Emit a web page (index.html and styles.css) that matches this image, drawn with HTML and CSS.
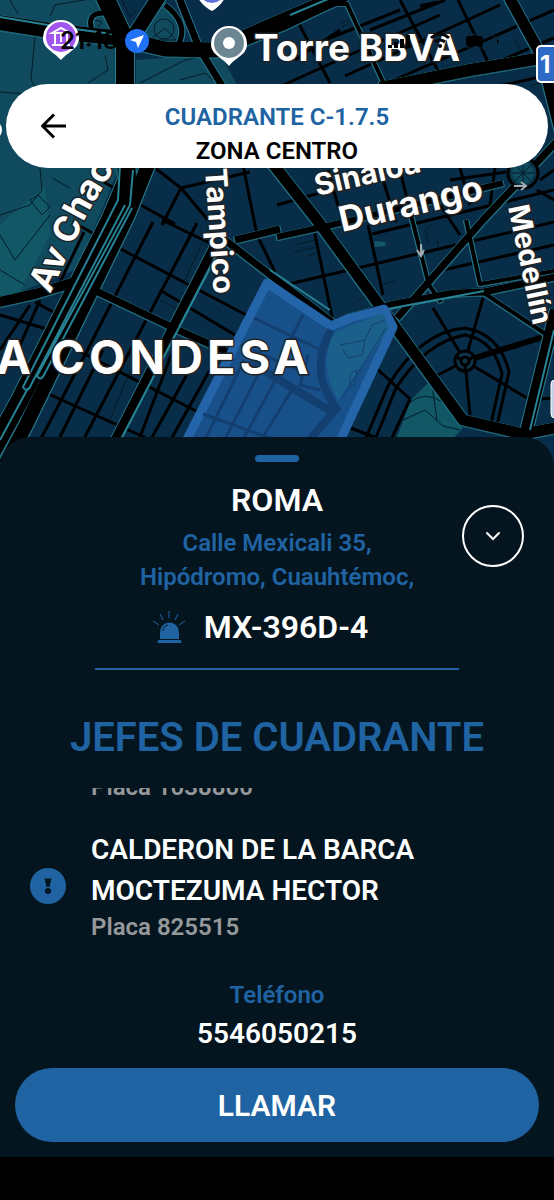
FILE: index.html
```html
<!DOCTYPE html>
<html lang="es">
<head>
<meta charset="utf-8">
<meta name="viewport" content="width=device-width, initial-scale=1">
<title>Cuadrante C-1.7.5</title>
<link rel="stylesheet" href="styles.css">
</head>
<body>
<main class="app">
  <svg class="map" viewBox="0 0 554 480" preserveAspectRatio="xMidYMin slice" role="img" aria-label="Mapa de La Condesa">
    <defs>
      <path id="label-chapultepec" d="M50 294L79 232Q86 215 101 191L124 152"/>
      <g id="avenues">
        <path stroke-width="15" d="M-5 22L60 32L118 38L165 49L215 50L280 22L345 -6"/>
        <path stroke-width="18" d="M104 -5L125 40V130L127 180L110 220L20 400L-10 455"/>
        <path stroke-width="14" d="M160 -5L126 48"/>
        <path stroke-width="14" d="M150 160L128 215L26 425L5 465"/>
        <path stroke-width="10" d="M-5 303L35 294L75 282"/>
        <path stroke-width="7" d="M92 289L178 330L250 362L345 412"/>
        <path stroke-width="11" d="M262 150L317 220L377 302L463 420L523 434L560 427"/>
        <path stroke-width="7" d="M178 -5L200 50L262 150"/>
        <path stroke-width="7" d="M560 138L483 220L397 318"/>
        <path stroke-width="11" d="M508 -5L541 55L560 130"/>
        <path stroke-width="12" d="M380 88L470 70L560 55"/>
        <path stroke-width="12" d="M556 310L524 440"/>
        <path stroke-width="4" d="M225 52L285 28L335 4L347 4L385 86"/>
        <path stroke-width="7" d="M347 318L390 305L454 293L484 292L560 276"/>
        <path stroke-width="6" d="M277 237L345 222L503 183"/>
        <path stroke-width="4" d="M466 220L480 284L560 270M484 293L550 337M411 215L429 285L441 302"/>
        <path stroke-width="9" d="M214 247L110 450"/>
        <path stroke-width="7" d="M225 240L277 280L332 322M235 240L280 229"/>
        <path stroke-width="5" d="M92 30Q86 12 105 13M165 5Q190 24 178 45"/>
      </g>
      <g id="streets">
        <path d="M153 222L90 345L35 450M197 223L78 450M60 437L103 350M175 345L135 450M195 360L145 450M211 368L165 450M84 232L60 282M30 305L0 350M40 300L20 345"/>
        <path d="M117 247L250 317M77 350L200 413M42 391L155 442M160 290L235 335M12 428L30 440M0 315L50 330M35 302L55 313M78 225L98 236M162 220L220 248"/>
        <path d="M155 168L181 188L162 225M181 188L250 172M181 188L208 220M139 204L175 224M242 160L257 235M257 235L275 272M100 180L140 202"/>
        <path d="M277 88L345 57L440 15M295 60L340 30M298 22L330 83M325 40L400 10M400 0L442 78M458 0L490 66M370 30L445 0M345 76L500 5M385 84L554 10M420 6L438 2M490 65L554 38M480 90L554 74"/>
        <path d="M289 284L554 222M313 225L332 317M368 225L383 295M443 270L554 245M372 234L554 190M328 170L342 220M380 170L396 222M400 170L411 215M277 205L330 190M440 205L460 235M495 168L490 205M450 180L506 172M540 180L554 170M537 190L554 200M460 168L470 205"/>
        <path d="M465 361L433 308M465 361L483 298M465 361L527 398M465 361L470 415M465 361L430 379M374 366L410 399M348 427L395 445M410 399L390 442M540 399L554 398"/>
        <path stroke-width="6" d="M465 361L543 337"/>
        <path stroke-width="3" d="M365 440L388 386Q420 332 465 328Q500 334 509 372L496 430M375 440L396 388Q426 342 465 335Q494 340 502 374L490 428"/>
      </g>
    </defs>
    <rect class="land" width="554" height="480"/>
    <path class="park" d="M0 0H104L118 38V170L100 215L75 270L20 292L0 298ZM136 60L220 54L240 90L136 100ZM137 18L165 0L185 45L140 47Z"/>
    <path class="park park--bright" d="M429 382L463 428L450 442H395L411 400ZM0 225L45 185L50 235L20 292L0 298ZM375 241L386 242L385 246L374 247Z"/>
    <g class="paths">
      <path d="M10 0L18 14M50 16L55 5L95 -2M35 35L31 80L40 95L0 92M105 55L108 70L88 83M40 168L42 190L30 205L0 215M52 178L70 188M30 200L38 195L50 207L42 215ZM0 235L15 260L50 215M0 270L25 285M140 83L185 60L225 52M95 20L102 22L98 27M165 28L150 40H176ZM122 0L130 17L137 10M180 80L205 73L213 80"/>
      <circle cx="164" cy="29" r="10"/>
      <path d="M409 403Q425 390 442 402L463 427M403 420L425 410L443 426L460 430M432 385L437 420"/>
      <path d="M294 245L315 240M294 252L316 247M308 256L316 253M358 300L372 293M383 284L395 281M428 245L426 230L433 224M438 246V239M340 23L349 20M342 27L350 22M514 38L520 50M530 86L545 82"/>
      <path d="M185 280L202 243L214 252M160 300L190 315M130 370L108 425"/>
    </g>
    <use href="#streets" class="streets"/>
    <use href="#avenues" class="casing"/>
    <use href="#avenues" class="avenues"/>
    <path class="medians" d="M0 17L60 27L112 34M120 165L118 200L23 387Q27 394 31 385L125 205M133 170L130 205L37 376Q41 382 45 373L132 208M0 440L28 388M222 245L118 445M330 310L270 270M350 316L484 291M554 330L530 430M290 15L345 -8"/>
    <g class="plaza">
      <circle cx="465" cy="361" r="10"/>
      <circle cx="465" cy="361" r="4"/>
      <path d="M456 356L461 360M474 356L469 360M465 365V371"/>
      <circle cx="523" cy="173" r="15"/>
    </g>
    <circle class="park" cx="523" cy="173" r="11"/>
    <path class="paths" d="M512 173H534M523 162V184M515 165L531 181M531 165L515 181"/>
    <g class="zone">
      <path class="zone__area" d="M267 283L331 326L350 318L384 309L393 327L338 445H184Z"/>
      <path class="zone__park" d="M334 332L383 313L389 328L338 400Q318 365 334 332Z"/>
      <path class="zone__streets" d="M254 318L325 352M240 345L310 375M203 414L275 440M244 360L205 440M261 369L222 445M277 377L240 445M293 388L255 450M303 315L290 340M308 355L300 385L320 390"/>
      <path class="zone__avenue" d="M250 362L332 412M331 330Q312 365 328 395L338 412M335 410L305 445"/>
      <path class="zone__details" d="M340 345L365 340L372 325L385 320M350 388V374L357 370L355 385ZM365 340L362 355L348 358L343 350M386 328L342 398"/>
    </g>
    <g class="labels">
      <text x="254" y="61" font-size="37">Torre BBVA</text>
      <text x="-4" y="374" font-size="47" letter-spacing="4">A CONDESA</text>
      <text font-size="35"><textPath href="#label-chapultepec">Av Chac</textPath></text>
      <text font-size="30" transform="translate(205 169) rotate(86)">Tampico</text>
      <text font-size="30" transform="translate(317 196) rotate(-13)">Sinaloa</text>
      <text font-size="35" transform="translate(342 232) rotate(-13)">Durango</text>
      <text font-size="29" transform="translate(508 207) rotate(78)">Medellín</text>
    </g>
    <g class="pins">
      <path fill="#fff" d="M43 38A18 18 0 1 1 79 38C79 49 69 51 61 60C53 51 43 49 43 38Z"/>
      <circle cx="61" cy="37" r="15" fill="#a256f0"/>
      <path fill="none" stroke="#fff" stroke-width="2" d="M52 33L61 28L70 33ZM55 33V44M61 33V42M67 33V44M52 45H70"/>
      <path fill="#fff" d="M211 44A18 18 0 1 1 247 44C247 55 236 57 229 66C222 57 211 55 211 44Z"/>
      <circle cx="229" cy="43" r="15" fill="#6b8591"/>
      <circle cx="229" cy="43" r="6" fill="#fff"/>
      <path fill="#fff" d="M197 -4H226Q221 6 212 11Q202 6 197 -4Z"/>
      <circle cx="212" cy="-10" r="13" fill="#5e72d8"/>
      <circle cx="-8" cy="130" r="10" fill="#fff"/>
      <rect x="537" y="46" width="38" height="36" rx="4" fill="#2d6bc6" stroke="#fff" stroke-width="2"/>
      <text x="540" y="73" font-size="24">1</text>
      <rect x="551" y="380" width="20" height="38" rx="4" fill="#c5cee5" stroke="#fff" stroke-width="1"/>
      <path fill="none" stroke="#a5abb0" stroke-width="2" d="M421 244V255M417 250L421 256L424 250M514 186H525M521 182L526 186L521 190"/>
    </g>
  </svg>

  <div class="top">
    <div class="status">
      <time class="status__time">21:18</time>
      <svg class="status__location" viewBox="0 0 24 24" aria-hidden="true"><circle cx="12" cy="12" r="12" fill="#2071f5"/><path fill="#fff" d="M19 6L13 19L11 13L5 11Z"/></svg>
      <svg class="status__system" viewBox="0 0 114 20" aria-hidden="true">
        <path d="M2 14H6V17H2ZM8 11H12V17H8ZM14 8H18V17H14ZM20 4H24V17H20Z"/>
        <path fill="none" stroke="#080808" stroke-width="3" d="M45 7Q54 -1 63 7M49 11Q54 7 59 11"/><circle cx="54" cy="15" r="2"/>
        <rect x="78" y="3" width="31" height="14" rx="5" fill="none" stroke="#102638" stroke-width="1"/><rect x="80" y="5" width="17" height="10" rx="3"/><path d="M111 8Q114 10 111 13Z"/>
      </svg>
    </div>
    <header class="header">
      <button class="header__back" type="button" aria-label="Volver">
        <svg viewBox="0 0 26 26" aria-hidden="true"><path d="M25 13H2M13 1.500L1.500 13L13 24.500"/></svg>
      </button>
      <div class="header__text">
        <h1 class="header__title">CUADRANTE C-1.7.5</h1>
        <p class="header__zone">ZONA CENTRO</p>
      </div>
    </header>
  </div>

  <section class="sheet">
    <div class="sheet__handle"></div>
    <div class="summary">
      <div class="summary__text">
        <h2 class="summary__name">ROMA</h2>
        <address class="summary__address">Calle Mexicali 35,<br>Hipódromo, Cuauhtémoc,</address>
      </div>
      <button class="summary__toggle" type="button" aria-label="Contraer">
        <svg viewBox="0 0 14 10" aria-hidden="true"><path d="M1 2L7 8L13 2"/></svg>
      </button>
    </div>
    <div class="unit">
      <svg class="unit__icon" viewBox="0 0 34 34" aria-hidden="true">
        <path fill="#2063a2" d="M8 29V22A9.500 9.500 0 0 1 27 22V29ZM7 30H28Q29.500 30 29.500 33H5.500Q5.500 30 7 30Z"/>
        <path class="unit__rays" d="M17 1V8M8 4L11 10M26 4L23 10M1 11L7 15M33 11L27 15"/>
        <path fill="none" stroke="#04151f" stroke-width="1" d="M11 21Q11 16 16 15"/>
      </svg>
      <span>MX-396D-4</span>
    </div>
    <hr class="divider">
    <h2 class="sheet__heading">JEFES DE CUADRANTE</h2>
    <ul class="chiefs">
      <li class="chief chief--plain">
        <p class="chief__badge">Placa 1038800</p>
      </li>
      <li class="chief">
        <svg class="chief__icon" viewBox="0 0 36 36" aria-hidden="true"><circle cx="18" cy="18" r="18" fill="#2063a2"/><path fill="#04151f" d="M14.500 10.500H21.500L19.500 19H16.500Z"/><circle cx="18" cy="23" r="3" fill="#04151f"/></svg>
        <div>
          <h3 class="chief__name">CALDERON DE LA BARCA MOCTEZUMA HECTOR</h3>
          <p class="chief__badge">Placa 825515</p>
        </div>
      </li>
    </ul>
    <div class="phone">
      <p class="phone__label">Teléfono</p>
      <p class="phone__number">5546050215</p>
    </div>
    <button class="call" type="button">LLAMAR</button>
  </section>
</main>
</body>
</html>
```
FILE: styles.css
```css
* {
  box-sizing: border-box;
  margin: 0;
  padding: 0;
}

body {
  background: #000;
  color: #fff;
  font-family: Roboto, "Liberation Sans", sans-serif;
  font-weight: 600;
}

button {
  border: 0;
  background: none;
  color: inherit;
  font: inherit;
  cursor: pointer;
}

.app {
  position: relative;
  display: flex;
  flex-direction: column;
  justify-content: space-between;
  min-height: 100vh;
  padding-bottom: 43px;
  overflow: hidden;
}

/* Map */
.map {
  position: absolute;
  top: 0;
  left: 0;
  width: 100%;
  height: 480px;
}

.land { fill: #082d48; }
.park { fill: #104a5e; }
.park--bright { fill: #115765; }

.paths {
  fill: none;
  stroke: #041b28;
  stroke-width: 1;
}

.streets {
  fill: none;
  stroke: #000;
  stroke-width: 3;
}

.casing {
  fill: none;
  stroke: #25778a;
  stroke-linejoin: round;
  filter: drop-shadow(1px 0 0 #25778a) drop-shadow(-1px 0 0 #25778a) drop-shadow(0 1px 0 #1c6478);
}

.avenues {
  fill: none;
  stroke: #000;
  stroke-linejoin: round;
}

.medians {
  fill: none;
  stroke: #268295;
  stroke-width: 2;
}

.plaza {
  fill: #0d3349;
  stroke: #000;
  stroke-width: 3;
}

.zone__area {
  fill: #18518a;
  stroke: #2464a8;
  stroke-width: 9;
  stroke-linejoin: round;
}

.zone__park { fill: #1b608b; }

.zone__streets,
.zone__avenue,
.zone__details {
  fill: none;
  stroke: #133f70;
  stroke-width: 3;
}

.zone__avenue { stroke-width: 8; }
.zone__details { stroke-width: 1; }

.labels {
  fill: #fff;
  stroke: #202325;
  stroke-width: 3;
  stroke-linejoin: round;
  paint-order: stroke;
  font-family: Inter, "Liberation Sans", sans-serif;
  font-weight: 700;
}

.pins {
  fill: #fff;
  font-family: Inter, "Liberation Sans", sans-serif;
  font-weight: 700;
}

/* Status bar and header */
.top {
  position: relative;
  padding: 0 6px;
}

.status {
  display: flex;
  align-items: center;
  height: 84px;
  padding: 0 48px 2px 54px;
}

.status__time {
  color: #000;
  font: 600 24px/30px Inter, "Liberation Sans", sans-serif;
}

.status__location {
  width: 24px;
  height: 24px;
  margin-left: 7px;
}

.status__system {
  width: 114px;
  height: 20px;
  margin-left: auto;
}

.header {
  display: grid;
  grid-template-columns: 48px 1fr 48px;
  min-height: 84px;
  padding: 0 24px;
  border-radius: 42px;
  background: #fff;
  color: #000;
}

.header__back {
  display: grid;
  place-items: center;
}

.header__back svg {
  width: 26px;
  height: 26px;
  fill: none;
  stroke: #000;
  stroke-width: 3;
}

.header__text {
  padding-top: 16px;
  text-align: center;
  font-size: 24px;
  line-height: 34px;
}

.header__title {
  color: #2063a2;
  font: inherit;
}

/* Bottom sheet */
.sheet {
  position: relative;
  padding: 18px 15px 15px;
  border-radius: 30px 30px 0 0;
  background: #04151f;
}

.sheet__handle {
  width: 44px;
  height: 7px;
  margin: 0 auto 16px;
  border-radius: 4px;
  background: #2063a2;
}

.summary {
  display: grid;
  grid-template-columns: 62px 1fr 62px;
  align-items: center;
  padding: 0 15px;
}

.summary__text {
  grid-column: 2;
  text-align: center;
}

.summary__name {
  margin-bottom: 4px;
  font-size: 32px;
  font-weight: 600;
  line-height: 44px;
}

.summary__address {
  color: #2063a2;
  font-size: 24px;
  font-style: normal;
  line-height: 34px;
}

.summary__toggle {
  display: grid;
  place-items: center;
  width: 62px;
  height: 62px;
  border: 2px solid #fff;
  border-radius: 50%;
}

.summary__toggle svg {
  width: 14px;
  height: 10px;
  fill: none;
  stroke: #fff;
  stroke-width: 2;
  stroke-linecap: round;
}

.unit {
  display: flex;
  align-items: center;
  justify-content: center;
  gap: 18px;
  margin: 11px 34px 19px 0;
  font-size: 32px;
  line-height: 44px;
}

.unit__icon {
  width: 34px;
  height: 34px;
}

.unit__rays {
  fill: none;
  stroke: #2063a2;
  stroke-width: 1;
}

.divider {
  height: 2px;
  margin: 0 80px;
  border: 0;
  background: #2063a2;
}

.sheet__heading {
  margin: 40px 0 22px;
  color: #2063a2;
  font-size: 40px;
  font-weight: 600;
  line-height: 56px;
  text-align: center;
}

/* The list rests at its scrolled end, so earlier entries are cut at the top. */
.chiefs {
  display: flex;
  flex-direction: column;
  justify-content: flex-end;
  height: 170px;
  padding: 0 15px 15px;
  overflow: hidden;
  list-style: none;
}

.chief {
  display: flex;
  flex: none;
  align-items: center;
  gap: 25px;
}

.chief--plain {
  margin-bottom: 26px;
  padding-left: 61px;
}

.chief__icon {
  flex: none;
  width: 36px;
  height: 36px;
}

.chief__name {
  max-width: 400px;
  font-size: 28px;
  font-weight: 600;
  line-height: 41px;
}

.chief__badge {
  color: #96999b;
  font-size: 24px;
  line-height: 32px;
}

.phone {
  margin: 20px 0 12px;
  text-align: center;
}

.phone__label {
  color: #2063a2;
  font-size: 24px;
  line-height: 34px;
}

.phone__number {
  font-size: 28px;
  line-height: 44px;
}

.call {
  display: block;
  width: 100%;
  height: 74px;
  border-radius: 37px;
  background: #2063a2;
  font-size: 30px;
}
```
